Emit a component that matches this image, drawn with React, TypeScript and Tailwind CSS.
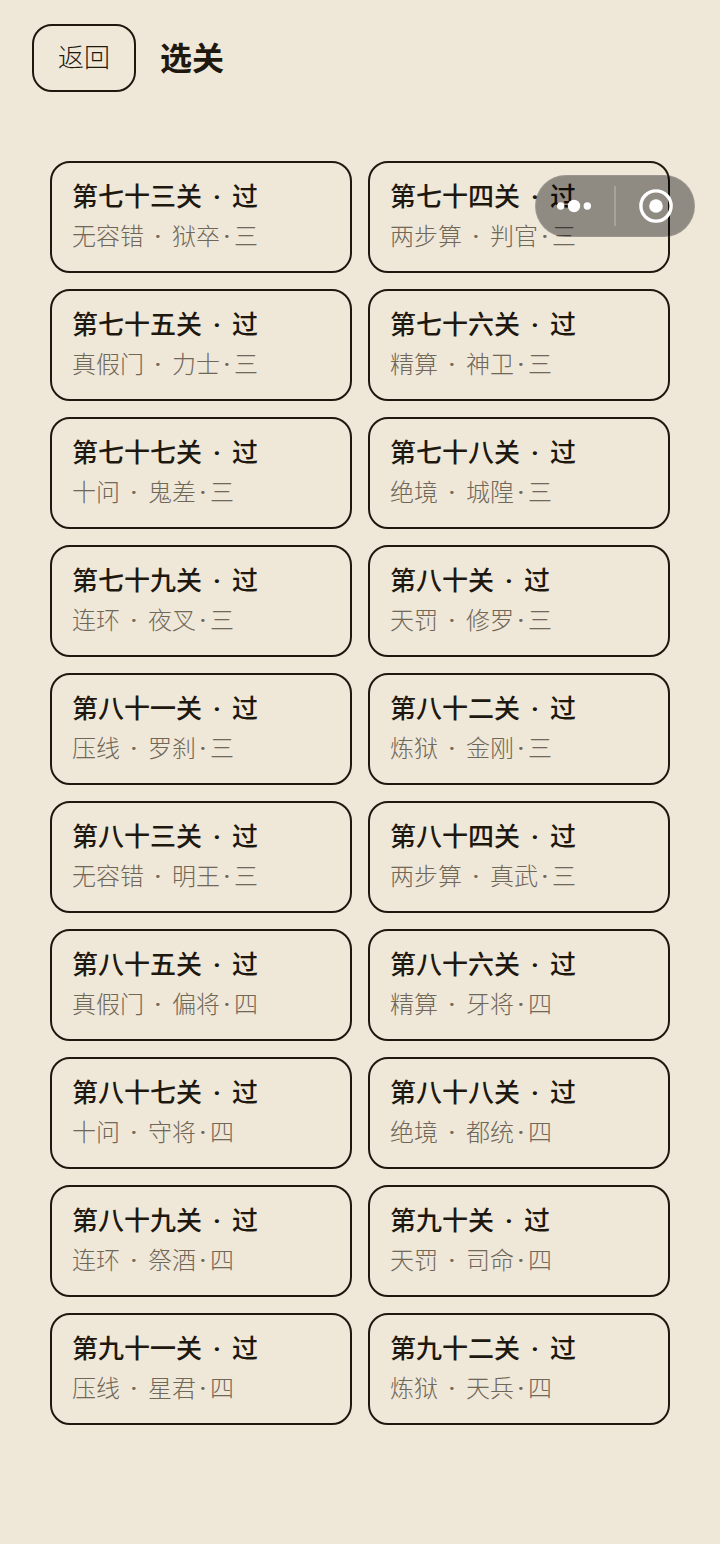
import React from 'react';

interface Level {
  title: string;
  mode: string;
  enemy: string;
  rank: string;
  passed: boolean;
}

const LEVELS: Level[] = [
  { title: '第七十三关', mode: '无容错', enemy: '狱卒', rank: '三', passed: true },
  { title: '第七十四关', mode: '两步算', enemy: '判官', rank: '三', passed: true },
  { title: '第七十五关', mode: '真假门', enemy: '力士', rank: '三', passed: true },
  { title: '第七十六关', mode: '精算', enemy: '神卫', rank: '三', passed: true },
  { title: '第七十七关', mode: '十问', enemy: '鬼差', rank: '三', passed: true },
  { title: '第七十八关', mode: '绝境', enemy: '城隍', rank: '三', passed: true },
  { title: '第七十九关', mode: '连环', enemy: '夜叉', rank: '三', passed: true },
  { title: '第八十关', mode: '天罚', enemy: '修罗', rank: '三', passed: true },
  { title: '第八十一关', mode: '压线', enemy: '罗刹', rank: '三', passed: true },
  { title: '第八十二关', mode: '炼狱', enemy: '金刚', rank: '三', passed: true },
  { title: '第八十三关', mode: '无容错', enemy: '明王', rank: '三', passed: true },
  { title: '第八十四关', mode: '两步算', enemy: '真武', rank: '三', passed: true },
  { title: '第八十五关', mode: '真假门', enemy: '偏将', rank: '四', passed: true },
  { title: '第八十六关', mode: '精算', enemy: '牙将', rank: '四', passed: true },
  { title: '第八十七关', mode: '十问', enemy: '守将', rank: '四', passed: true },
  { title: '第八十八关', mode: '绝境', enemy: '都统', rank: '四', passed: true },
  { title: '第八十九关', mode: '连环', enemy: '祭酒', rank: '四', passed: true },
  { title: '第九十关', mode: '天罚', enemy: '司命', rank: '四', passed: true },
  { title: '第九十一关', mode: '压线', enemy: '星君', rank: '四', passed: true },
  { title: '第九十二关', mode: '炼狱', enemy: '天兵', rank: '四', passed: true },
];

// 间隔点：窄点用西文字体，避免占满一个全角
function Dot({ className }: { className: string }) {
  return (
    <span className={`inline-block text-center leading-none font-['Roboto',sans-serif] ${className}`}>·</span>
  );
}

function LevelCard({ level }: { level: Level }) {
  return (
    <button
      type="button"
      className="flex h-28 flex-col items-start rounded-[20px] border-2 border-[#1e180f] px-5 pt-3 text-left"
    >
      <span className="text-[26px] leading-10 font-medium text-[#1e180f]">
        {level.title}
        {level.passed && <><Dot className="w-[30px] font-bold" />过</>}
      </span>
      <span className="text-[24px] leading-10 font-light text-[#6f6758]">
        {level.mode}
        <Dot className="w-7 font-medium" />
        {level.enemy}
        <Dot className="w-3.5 font-medium" />
        {level.rank}
      </span>
    </button>
  );
}

// 右上角胶囊按钮，悬浮在列表之上
function Capsule() {
  return (
    <div className="fixed top-[175px] right-[25px] flex h-[62px] w-[160px] items-center rounded-full border border-white/10 bg-black/40">
      <button type="button" aria-label="更多" className="flex h-full flex-1 items-center justify-center pr-0.5">
        <svg width="36" height="14" viewBox="0 0 36 14" fill="#fff">
          <circle cx="4.7" cy="7" r="3.7" />
          <circle cx="18" cy="7" r="6.2" />
          <circle cx="31.3" cy="7" r="3.7" />
        </svg>
      </button>
      <span className="h-10 w-0.5 bg-white/20" />
      <button type="button" aria-label="关闭" className="flex h-full flex-1 items-center justify-center pl-0.5">
        <svg width="34" height="34" viewBox="0 0 34 34" fill="none">
          <circle cx="17" cy="17" r="15.1" stroke="#fff" strokeWidth="3.4" />
          <circle cx="17" cy="17" r="6.8" fill="#fff" />
        </svg>
      </button>
    </div>
  );
}

export default function App() {
  return (
    <div className="min-h-screen bg-[#efe8d9] pb-[119px] font-['Noto_Sans_CJK_SC',sans-serif] text-[#1e180f]">
      <header className="flex items-start gap-6 px-8 pt-6">
        <button
          type="button"
          className="flex h-[68px] rounded-[20px] border-2 border-[#1e180f] px-6 pt-2.5 text-[26px] leading-10 font-light"
        >
          返回
        </button>
        <h1 className="pt-3 text-[32px] leading-10 font-bold">选关</h1>
      </header>

      <main className="mt-[69px] grid grid-cols-2 gap-4 px-[50px]">
        {LEVELS.map(level => (
          <LevelCard key={level.title} level={level} />
        ))}
      </main>

      <Capsule />
    </div>
  );
}
